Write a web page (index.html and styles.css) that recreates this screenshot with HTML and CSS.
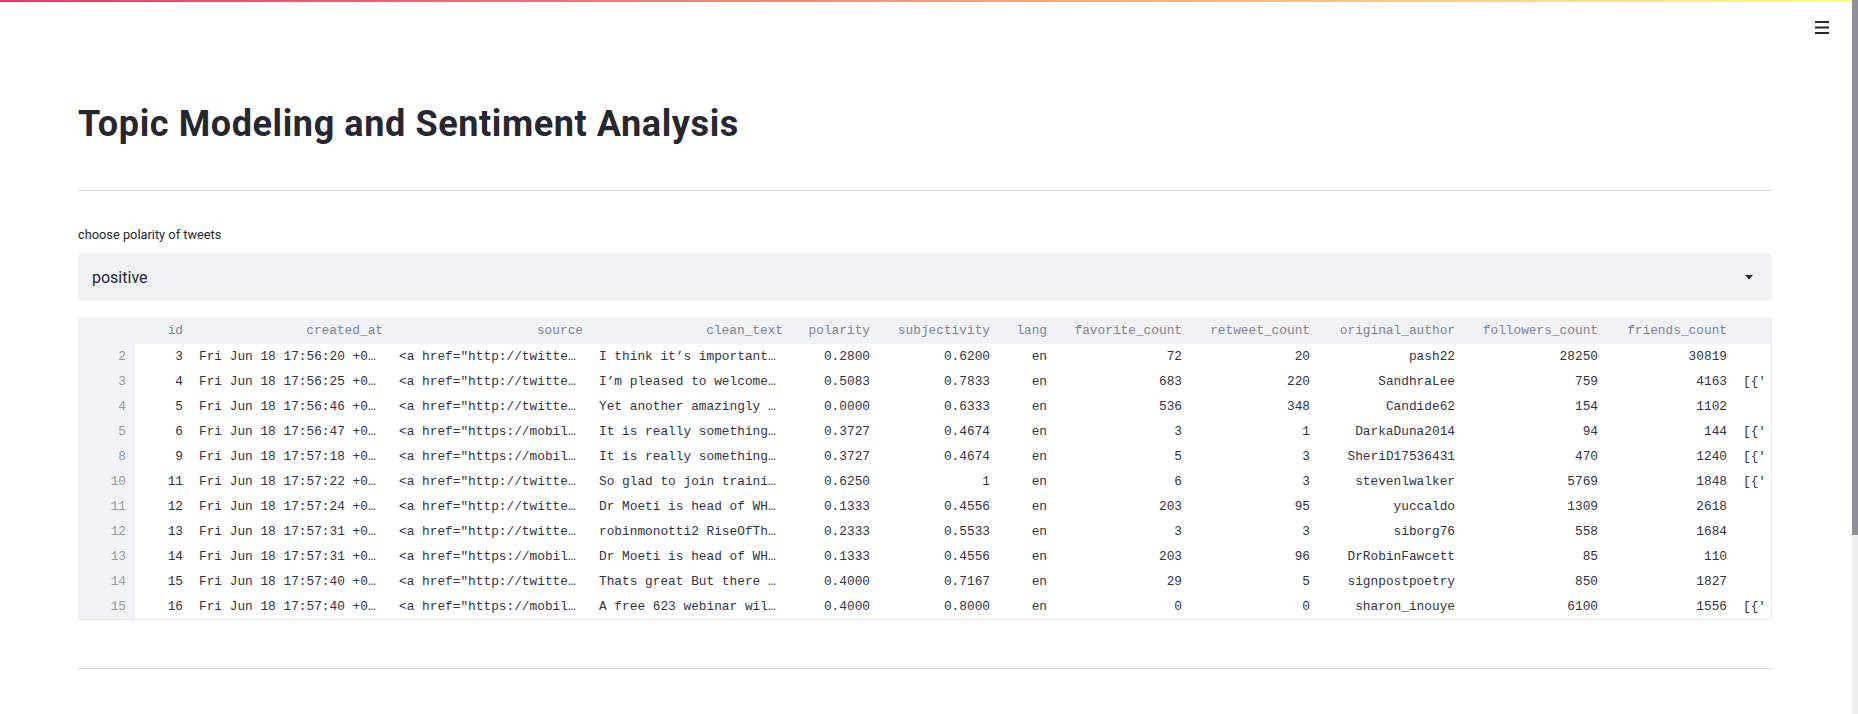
FILE: index.html
```html
<!DOCTYPE html>
<html lang="en">
<head>
<meta charset="utf-8">
<title>Topic Modeling and Sentiment Analysis</title>
<link rel="stylesheet" href="styles.css">
</head>
<body>
<div class="decoration"></div>
<button class="menu-btn" aria-label="menu">
  <svg width="14" height="13" viewBox="0 0 14 13"><rect x="0" y="0" width="14" height="2" fill="#262730"/><rect x="0" y="5.5" width="14" height="2" fill="#262730"/><rect x="0" y="11" width="14" height="2" fill="#262730"/></svg>
</button>
<div class="scrollbar"><div class="thumb"></div></div>

<main class="main">
  <h1 class="title">Topic Modeling and Sentiment Analysis</h1>
  <hr class="divider first">

  <label class="label">choose polarity of tweets</label>
  <div class="select">
    <span class="select-value">positive</span>
    <svg class="caret" width="8" height="5" viewBox="0 0 8 5"><polygon points="0,0 8,0 4,4.5" fill="#262730"/></svg>
  </div>

  <div class="dataframe">
    <div class="row head">
      <div class="cell idx"></div>
      <div class="cell">id</div>
      <div class="cell">created_at</div>
      <div class="cell">source</div>
      <div class="cell">clean_text</div>
      <div class="cell">polarity</div>
      <div class="cell">subjectivity</div>
      <div class="cell">lang</div>
      <div class="cell">favorite_count</div>
      <div class="cell">retweet_count</div>
      <div class="cell">original_author</div>
      <div class="cell">followers_count</div>
      <div class="cell">friends_count</div>
      <div class="cell clip"></div>
    </div>

    <div class="row"><div class="cell idx">2</div><div class="cell">3</div><div class="cell">Fri Jun 18 17:56:20 +0000 2021</div><div class="cell">&lt;a href="http://twitter.com/download/android"</div><div class="cell">I think it’s important to remember</div><div class="cell">0.2800</div><div class="cell">0.6200</div><div class="cell">en</div><div class="cell">72</div><div class="cell">20</div><div class="cell">pash22</div><div class="cell">28250</div><div class="cell">30819</div><div class="cell clip"></div></div>

    <div class="row"><div class="cell idx">3</div><div class="cell">4</div><div class="cell">Fri Jun 18 17:56:25 +0000 2021</div><div class="cell">&lt;a href="http://twitter.com/download/iphone"</div><div class="cell">I’m pleased to welcome the</div><div class="cell">0.5083</div><div class="cell">0.7833</div><div class="cell">en</div><div class="cell">683</div><div class="cell">220</div><div class="cell">SandhraLee</div><div class="cell">759</div><div class="cell">4163</div><div class="cell clip">[{'text': 'WHO', 'indices': [10, 14]}]</div></div>

    <div class="row"><div class="cell idx">4</div><div class="cell">5</div><div class="cell">Fri Jun 18 17:56:46 +0000 2021</div><div class="cell">&lt;a href="http://twitter.com/download/android"</div><div class="cell">Yet another amazingly inspiring</div><div class="cell">0.0000</div><div class="cell">0.6333</div><div class="cell">en</div><div class="cell">536</div><div class="cell">348</div><div class="cell">Candide62</div><div class="cell">154</div><div class="cell">1102</div><div class="cell clip"></div></div>

    <div class="row"><div class="cell idx">5</div><div class="cell">6</div><div class="cell">Fri Jun 18 17:56:47 +0000 2021</div><div class="cell">&lt;a href="https://mobile.twitter.com"</div><div class="cell">It is really something special</div><div class="cell">0.3727</div><div class="cell">0.4674</div><div class="cell">en</div><div class="cell">3</div><div class="cell">1</div><div class="cell">DarkaDuna2014</div><div class="cell">94</div><div class="cell">144</div><div class="cell clip">[{'text': 'COVID19', 'indices': [20, 28]}]</div></div>

    <div class="row"><div class="cell idx">8</div><div class="cell">9</div><div class="cell">Fri Jun 18 17:57:18 +0000 2021</div><div class="cell">&lt;a href="https://mobile.twitter.com"</div><div class="cell">It is really something special</div><div class="cell">0.3727</div><div class="cell">0.4674</div><div class="cell">en</div><div class="cell">5</div><div class="cell">3</div><div class="cell">SheriD17536431</div><div class="cell">470</div><div class="cell">1240</div><div class="cell clip">[{'text': 'COVID19', 'indices': [20, 28]}]</div></div>

    <div class="row"><div class="cell idx">10</div><div class="cell">11</div><div class="cell">Fri Jun 18 17:57:22 +0000 2021</div><div class="cell">&lt;a href="http://twitter.com/download/iphone"</div><div class="cell">So glad to join training today</div><div class="cell">0.6250</div><div class="cell">1</div><div class="cell">en</div><div class="cell">6</div><div class="cell">3</div><div class="cell">stevenlwalker</div><div class="cell">5769</div><div class="cell">1848</div><div class="cell clip">[{'text': 'HIV', 'indices': [40, 44]}]</div></div>

    <div class="row"><div class="cell idx">11</div><div class="cell">12</div><div class="cell">Fri Jun 18 17:57:24 +0000 2021</div><div class="cell">&lt;a href="http://twitter.com/download/android"</div><div class="cell">Dr Moeti is head of WHO in Africa</div><div class="cell">0.1333</div><div class="cell">0.4556</div><div class="cell">en</div><div class="cell">203</div><div class="cell">95</div><div class="cell">yuccaldo</div><div class="cell">1309</div><div class="cell">2618</div><div class="cell clip"></div></div>

    <div class="row"><div class="cell idx">12</div><div class="cell">13</div><div class="cell">Fri Jun 18 17:57:31 +0000 2021</div><div class="cell">&lt;a href="http://twitter.com/download/iphone"</div><div class="cell">robinmonotti2 RiseOfTheRest</div><div class="cell">0.2333</div><div class="cell">0.5533</div><div class="cell">en</div><div class="cell">3</div><div class="cell">3</div><div class="cell">siborg76</div><div class="cell">558</div><div class="cell">1684</div><div class="cell clip"></div></div>

    <div class="row"><div class="cell idx">13</div><div class="cell">14</div><div class="cell">Fri Jun 18 17:57:31 +0000 2021</div><div class="cell">&lt;a href="https://mobile.twitter.com"</div><div class="cell">Dr Moeti is head of WHO in Africa</div><div class="cell">0.1333</div><div class="cell">0.4556</div><div class="cell">en</div><div class="cell">203</div><div class="cell">96</div><div class="cell">DrRobinFawcett</div><div class="cell">85</div><div class="cell">110</div><div class="cell clip"></div></div>

    <div class="row"><div class="cell idx">14</div><div class="cell">15</div><div class="cell">Fri Jun 18 17:57:40 +0000 2021</div><div class="cell">&lt;a href="http://twitter.com/download/android"</div><div class="cell">Thats great But there are more</div><div class="cell">0.4000</div><div class="cell">0.7167</div><div class="cell">en</div><div class="cell">29</div><div class="cell">5</div><div class="cell">signpostpoetry</div><div class="cell">850</div><div class="cell">1827</div><div class="cell clip"></div></div>

    <div class="row"><div class="cell idx">15</div><div class="cell">16</div><div class="cell">Fri Jun 18 17:57:40 +0000 2021</div><div class="cell">&lt;a href="https://mobile.twitter.com"</div><div class="cell">A free 623 webinar will be held</div><div class="cell">0.4000</div><div class="cell">0.8000</div><div class="cell">en</div><div class="cell">0</div><div class="cell">0</div><div class="cell">sharon_inouye</div><div class="cell">6100</div><div class="cell">1556</div><div class="cell clip">[{'text': 'AgingResearch', 'indices': [0, 14]}]</div></div>
  </div>

  <hr class="divider last">
</main>
</body>
</html>
```

FILE: styles.css
```css
html, body {
  margin: 0;
  padding: 0;
  background: #ffffff;
  overflow: hidden;
  height: 714px;
}

body {
  font-family: Roboto, "Liberation Sans", sans-serif;
  color: #262730;
}

.decoration {
  position: fixed;
  top: 0;
  left: 0;
  right: 6px;
  height: 2px;
  background-image: linear-gradient(90deg, rgb(246, 51, 102), rgb(255, 253, 128));
  z-index: 5;
}

.menu-btn {
  position: fixed;
  top: 21px;
  right: 29px;
  padding: 0;
  margin: 0;
  border: 0;
  background: transparent;
  line-height: 0;
}

.scrollbar {
  position: fixed;
  top: 0;
  right: 0;
  width: 6px;
  height: 714px;
  background: #efefef;
}

.scrollbar .thumb {
  height: 535px;
  background: #908e96;
}

.main {
  padding: 102px 86px 0 78px;
  display: flex;
  flex-direction: column;
}

.title {
  margin: 0;
  font-family: Roboto, "Liberation Sans", sans-serif;
  font-weight: 700;
  font-size: 36px;
  line-height: 44px;
  color: #262730;
  letter-spacing: 0.6px;
}

.divider {
  margin: 0;
  border: 0;
  height: 1px;
  background: #d6d6d9;
}

.divider.first {
  margin-top: 44px;
}

.divider.last {
  margin-top: 48px;
}

.label {
  margin-top: 36px;
  font-size: 12.8px;
  line-height: 16px;
  color: #262730;
}

.select {
  margin-top: 10px;
  height: 48px;
  background: #f0f2f6;
  border-radius: 4px;
  display: flex;
  align-items: center;
  justify-content: space-between;
  padding: 0 19px 0 14px;
}

.select-value {
  font-size: 16px;
  color: #262730;
}

.caret {
  display: block;
}

.dataframe {
  margin-top: 17px;
  width: 1694px;
  box-sizing: border-box;
  overflow: hidden;
  border-right: 1px solid #e6e9ef;
  border-bottom: 1px solid #e6e9ef;
  font-family: "Liberation Mono", "DejaVu Sans Mono", monospace;
  font-size: 12.8px;
}

.row {
  display: grid;
  grid-template-columns: 57px 56px 200px 200px 200px 87px 120px 57px 135px 128px 145px 143px 129px 30px;
  height: 25px;
  line-height: 25px;
  color: #31333f;
}

.row.head {
  height: 26px;
  line-height: 26px;
  background: #f0f2f6;
  color: #808495;
}

.cell {
  padding: 0 8px;
  text-align: right;
  white-space: nowrap;
  overflow: hidden;
  text-overflow: ellipsis;
}

.cell.clip {
  text-align: left;
  padding: 0 0 0 8px;
  text-overflow: clip;
}

.cell.idx {
  background: #f0f2f6;
  color: #999aa3;
  padding: 0 9px 0 0;
}
```
